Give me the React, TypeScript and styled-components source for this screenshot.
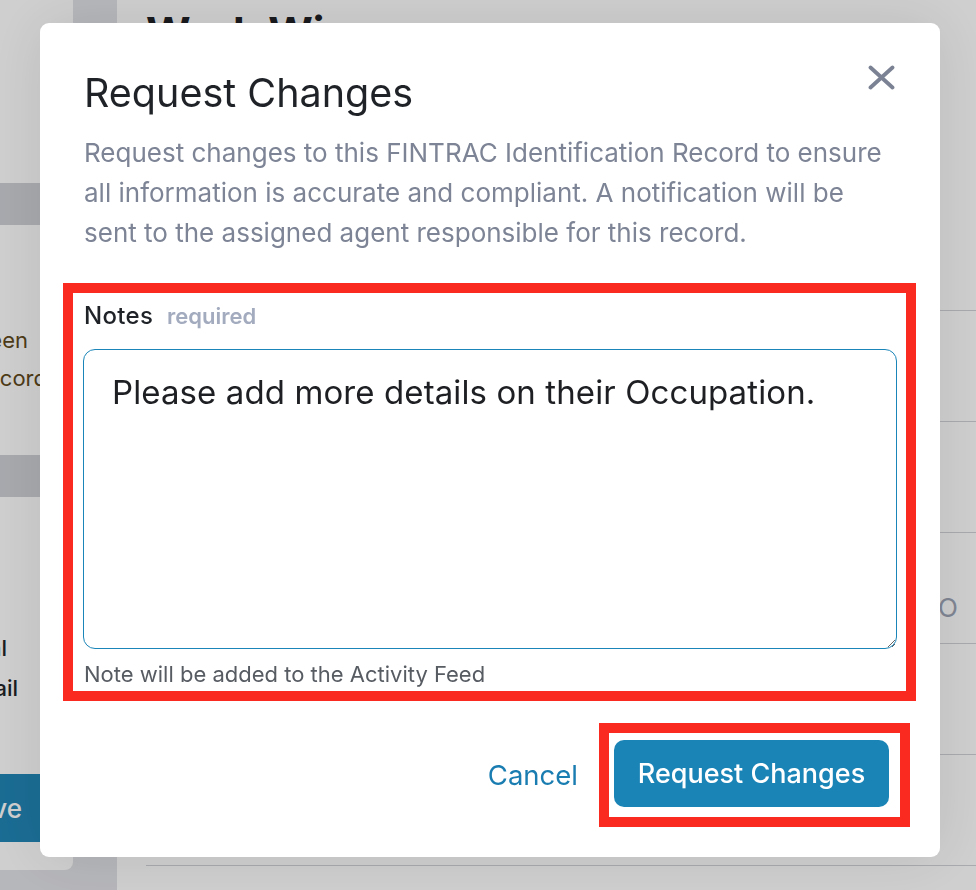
import styled, { createGlobalStyle } from "styled-components";

const GlobalStyle = createGlobalStyle`
  html, body {
    margin: 0;
    padding: 0;
    height: 890px;
    overflow: hidden;
    background: #e1e2e6;
    font-family: Inter, "Noto Sans", "Liberation Sans", sans-serif;
  }
  * {
    box-sizing: border-box;
  }
`;

const rows = [0, 1, 2, 3, 4, 5];

const App = () => {
  return (
    <>
      <GlobalStyle />
      <Page>
        <SideCard>
          <SideBand />
          <SideBody $top={96} $height={230}>
            <AlertLine $inset={45}>This identity has been</AlertLine>
            <AlertLine $inset={26}>attached to this record</AlertLine>
          </SideBody>
          <SideBand />
          <SideBody $top={131}>
            <SideLine $inset={66}>Send the final</SideLine>
            <SideLine $inset={55}>record by email</SideLine>
            <SideButton>Approve</SideButton>
          </SideBody>
        </SideCard>
        <Gutter />
        <Main>
          <PageTitle>Work Wise</PageTitle>
          <RowList>
            {rows.map((row) => (
              <Row key={row}>{row === 3 && <RowInitial>O</RowInitial>}</Row>
            ))}
          </RowList>
        </Main>
      </Page>

      <Overlay>
        <Modal>
          <Header>
            <Title>Request Changes</Title>
            <CloseButton aria-label="Close">
              <svg width="27" height="25" viewBox="0 0 27 25" fill="none">
                <path
                  d="M2.5 2.5L24.5 22.5M24.5 2.5L2.5 22.5"
                  stroke="#7b8293"
                  strokeWidth="3.8"
                  strokeLinecap="round"
                />
              </svg>
            </CloseButton>
          </Header>
          <Description>
            Request changes to this FINTRAC Identification Record to ensure
            all information is accurate and compliant. A notification will be
            sent to the assigned agent responsible for this record.
          </Description>

          <NotesBox>
            <LabelRow>
              <Label>Notes</Label>
              <Required>required</Required>
            </LabelRow>
            <NotesInput defaultValue="Please add more details on their Occupation." />
            <Hint>Note will be added to the Activity Feed</Hint>
          </NotesBox>

          <Footer>
            <CancelButton>Cancel</CancelButton>
            <SubmitBox>
              <SubmitButton>Request Changes</SubmitButton>
            </SubmitBox>
          </Footer>
        </Modal>
      </Overlay>
    </>
  );
};

export default App;

/* page underneath */

const Page = styled.div`
  display: flex;
  height: 890px;
  overflow: hidden;
`;

const SideCard = styled.aside`
  width: 73px;
  height: 870px;
  flex-shrink: 0;
  display: flex;
  flex-direction: column;
  padding-top: 183px;
  background: #ffffff;
  border-bottom-right-radius: 8px;
  overflow: hidden;
`;

const SideBand = styled.div`
  height: 42px;
  flex-shrink: 0;
  background: #cfd1d6;
`;

const SideBody = styled.div<{ $top: number; $height?: number }>`
  height: ${(p) => (p.$height ? `${p.$height}px` : "auto")};
  flex-shrink: 0;
  display: flex;
  flex-direction: column;
  align-items: flex-end;
  padding-top: ${(p) => p.$top}px;
`;

const AlertLine = styled.div<{ $inset: number }>`
  white-space: nowrap;
  padding-right: ${(p) => p.$inset}px;
  font-size: 22px;
  line-height: 38px;
  color: #604a1c;
`;

const SideLine = styled(AlertLine)`
  color: #222428;
  font-weight: 500;
  line-height: 40px;
`;

const SideButton = styled.div`
  margin: 66px 15px 0 0;
  height: 68px;
  padding-right: 36px;
  display: flex;
  align-items: center;
  white-space: nowrap;
  background: #2186b7;
  border-radius: 8px;
  color: #ffffff;
  font-size: 26px;
  font-weight: 500;
`;

const Gutter = styled.div`
  width: 44px;
  flex-shrink: 0;
`;

const Main = styled.main`
  flex: 1;
  background: #ffffff;
  padding: 6px 0 0 29px;
  display: flex;
  flex-direction: column;
`;

const PageTitle = styled.h1`
  margin: 0;
  height: 194px;
  font-size: 43px;
  line-height: 52px;
  font-weight: 700;
  color: #1e2024;
`;

const RowList = styled.div`
  display: flex;
  flex-direction: column;
`;

const Row = styled.div`
  height: 111px;
  border-bottom: 1px solid #d0d2d7;
  display: flex;
  justify-content: flex-end;
  align-items: flex-end;
  padding: 0 18px 20px 0;
`;

const RowInitial = styled.span`
  font-size: 26px;
  line-height: 30px;
  color: #9ea5b6;
`;

/* modal */

const Overlay = styled.div`
  position: fixed;
  inset: 0;
  background: rgba(0, 0, 0, 0.19);
  display: flex;
  align-items: flex-start;
  padding: 23px 0 0 40px;
`;

const Modal = styled.div`
  width: 900px;
  background: #ffffff;
  border-radius: 9px;
  box-shadow: 0 0 60px rgba(0, 0, 0, 0.1);
  padding: 47px 43px 30px 44px;
  display: flex;
  flex-direction: column;
`;

const Header = styled.div`
  display: flex;
  justify-content: space-between;
  align-items: flex-start;
`;

const Title = styled.h2`
  margin: 0;
  font-size: 39.5px;
  line-height: 47px;
  font-weight: 400;
  color: #1f2328;
`;

const CloseButton = styled.button`
  margin: -5px 2px 0 0;
  padding: 0;
  border: 0;
  background: none;
  display: flex;
  cursor: pointer;
`;

const Description = styled.p`
  margin: 16px 0 0;
  font-size: 26px;
  line-height: 40px;
  color: #7d8495;
`;

const NotesBox = styled.div`
  margin: 30px -19px 0 -21px;
  border: 10px solid #fb2a21;
  padding: 8px 9px 3px 10px;
  display: flex;
  flex-direction: column;
`;

const LabelRow = styled.div`
  display: flex;
  align-items: baseline;
  gap: 14px;
  padding-left: 1px;
`;

const Label = styled.span`
  font-size: 24px;
  letter-spacing: 0.3px;
  line-height: 30px;
  font-weight: 500;
  color: #1f2328;
`;

const Required = styled.span`
  font-size: 22px;
  font-weight: 600;
  color: #a3abbf;
`;

const NotesInput = styled.textarea`
  margin-top: 18px;
  height: 300px;
  width: 100%;
  border: 1px solid #1a85b8;
  border-radius: 12px;
  padding: 21px 28px;
  font-family: inherit;
  font-size: 33px;
  letter-spacing: 0.1px;
  line-height: 42px;
  color: #1d1f23;
  outline: none;
  resize: vertical;
`;

const Hint = styled.div`
  margin-top: 11px;
  padding-left: 1px;
  font-size: 22px;
  line-height: 28px;
  color: #575b62;
`;

const Footer = styled.div`
  margin: 22px -13px 0 0;
  display: flex;
  justify-content: flex-end;
  align-items: center;
  gap: 21px;
`;

const CancelButton = styled.button`
  border: 0;
  background: none;
  padding: 0;
  font-family: inherit;
  font-size: 27.5px;
  color: #1a7db1;
  cursor: pointer;
`;

const SubmitBox = styled.div`
  border: 10px solid #fb2a21;
  padding: 7px 11px 10px 5px;
  display: flex;
`;

const SubmitButton = styled.button`
  width: 275px;
  height: 67px;
  border: 0;
  border-radius: 10px;
  background: #1b84b7;
  color: #ffffff;
  font-family: inherit;
  font-size: 27px;
  font-weight: 500;
  cursor: pointer;
`;
